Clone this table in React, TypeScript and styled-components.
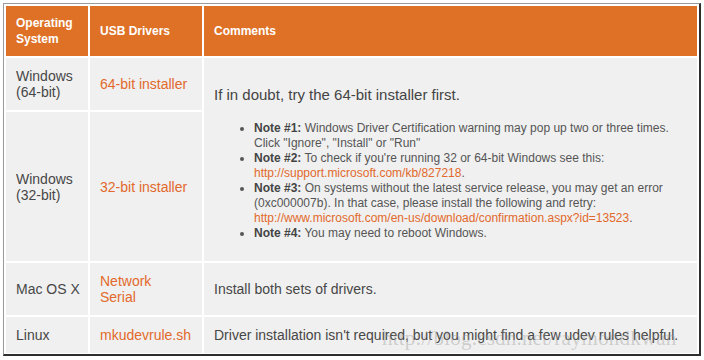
import styled, { createGlobalStyle } from 'styled-components';

const GlobalStyle = createGlobalStyle`
  html, body {
    margin: 0;
    padding: 0;
    background: #ffffff;
  }
  body {
    font-family: "Liberation Sans", Arial, sans-serif;
    color: #444444;
  }
`;

const Frame = styled.div`
  position: relative;
  margin: 3px 0 0 3px;
  width: 695px;
  border-top: 1px solid #9a9a9a;
  border-left: 1px solid #9a9a9a;
  border-right: 2px solid #2e2e2e;
  border-bottom: 2px solid #2e2e2e;
  background: #ffffff;
`;

const Grid = styled.div`
  display: grid;
  grid-template-columns: 82px 112px 493px;
  grid-template-rows: 50px 52px 149px 52px 36px;
  gap: 2px;
  padding: 2px 2px 1px 2px;
`;

const HeadCell = styled.div`
  display: flex;
  align-items: center;
  padding: 0 10px;
  background: #de7126;
  color: #ffffff;
  font-size: 12px;
  font-weight: bold;
  line-height: 16px;
`;

const Cell = styled.div<{ $span?: boolean }>`
  display: flex;
  align-items: center;
  padding: 0 6px 0 10px;
  background: #f0f0f0;
  font-size: 14px;
  line-height: 16px;
  color: #474747;
  ${p => (p.$span ? 'grid-row: 2 / 4; grid-column: 3;' : '')}
`;

const CommentBody = styled.div`
  padding-top: 8px;
`;

const Lead = styled.p`
  margin: 0;
  font-size: 15px;
  line-height: 18px;
  color: #444444;
`;

const Notes = styled.ul`
  margin: 17px 0 0 0;
  padding-left: 40px;
  font-size: 12px;
  line-height: 15px;
  color: #555555;
  list-style: disc;
`;

const NoteLabel = styled.b`
  color: #444444;
`;

const Link = styled.a`
  color: #e2692b;
  text-decoration: none;
`;

const Stack = styled.div`
  display: flex;
  flex-direction: column;
`;

const Watermark = styled.div`
  position: absolute;
  left: 378px;
  top: 322px;
  font-family: "Liberation Serif", "Times New Roman", serif;
  font-size: 21px;
  letter-spacing: 0.2px;
  color: rgba(150, 150, 150, 0.4);
  pointer-events: none;
  white-space: nowrap;
`;

const notes = [
  {
    label: 'Note #1:',
    body: <> Windows Driver Certification warning may pop up two or three times. Click "Ignore", "Install" or "Run"</>,
  },
  {
    label: 'Note #2:',
    body: (
      <>
        {' '}To check if you're running 32 or 64-bit Windows see this:{' '}
        <Link>http://support.microsoft.com/kb/827218</Link>.
      </>
    ),
  },
  {
    label: 'Note #3:',
    body: (
      <>
        {' '}On systems without the latest service release, you may get an error (0xc000007b). In that case, please
        install the following and retry: <Link>http://www.microsoft.com/en-us/download/confirmation.aspx?id=13523</Link>.
      </>
    ),
  },
  { label: 'Note #4:', body: <> You may need to reboot Windows.</> },
];

const App = () => {
  return (
    <>
      <GlobalStyle />
      <Frame>
        <Grid>
          <HeadCell>Operating System</HeadCell>
          <HeadCell>USB Drivers</HeadCell>
          <HeadCell>Comments</HeadCell>

          <Cell>Windows (64-bit)</Cell>
          <Cell>
            <Link>64-bit installer</Link>
          </Cell>
          <Cell $span>
            <CommentBody>
              <Lead>If in doubt, try the 64-bit installer first.</Lead>
              <Notes>
                {notes.map(n => (
                  <li key={n.label}>
                    <NoteLabel>{n.label}</NoteLabel>
                    {n.body}
                  </li>
                ))}
              </Notes>
            </CommentBody>
          </Cell>

          <Cell>Windows (32-bit)</Cell>
          <Cell>
            <Link>32-bit installer</Link>
          </Cell>

          <Cell>Mac OS X</Cell>
          <Cell>
            <Stack>
              <Link>Network</Link>
              <Link>Serial</Link>
            </Stack>
          </Cell>
          <Cell>Install both sets of drivers.</Cell>

          <Cell>Linux</Cell>
          <Cell>
            <Link>mkudevrule.sh</Link>
          </Cell>
          <Cell>Driver installation isn't required, but you might find a few udev rules helpful.</Cell>
        </Grid>
        <Watermark>http://blog.csdn.net/raymondkwan</Watermark>
      </Frame>
    </>
  );
};

export default App;
